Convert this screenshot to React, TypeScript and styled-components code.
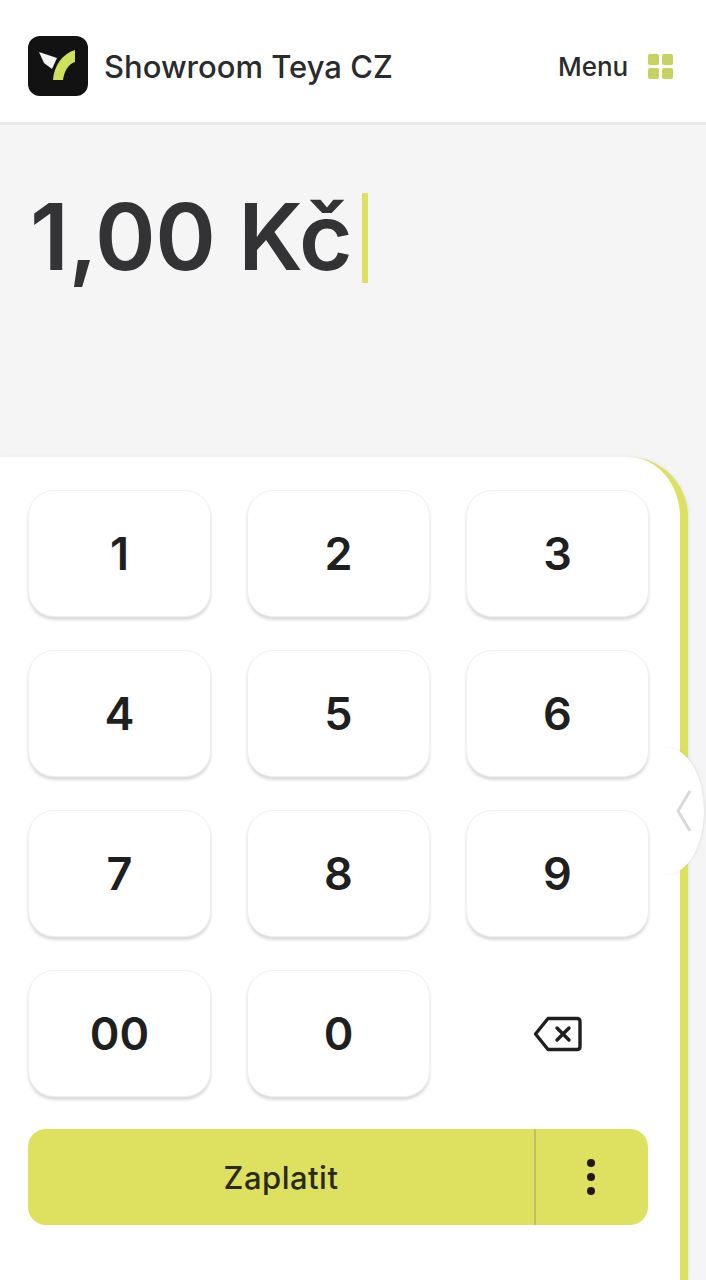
import React from "react";
import styled, { createGlobalStyle } from "styled-components";

const Global = createGlobalStyle`
  html, body { margin: 0; padding: 0; background: #f5f5f5; }
  body { font-family: "Inter", "Liberation Sans", sans-serif; color: #2a2a2a; overflow: hidden; }
`;

const Page = styled.div`
  width: 706px;
  height: 1280px;
  display: flex;
  flex-direction: column;
  position: relative;
  overflow: hidden;
`;

const Header = styled.header`
  height: 122px;
  flex: none;
  box-sizing: border-box;
  background: #fff;
  display: flex;
  align-items: center;
  justify-content: space-between;
  padding: 10px 33px 0 28px;
`;

const HeaderRule = styled.div`
  height: 3px;
  flex: none;
  background: #e9e9e9;
`;

const Brand = styled.div`
  display: flex;
  align-items: center;
  gap: 16px;
`;

const LogoBox = styled.div`
  width: 60px;
  height: 60px;
  border-radius: 12px;
  background: #121212;
  display: flex;
  align-items: center;
  justify-content: center;
`;

const BrandName = styled.span`
  font-size: 31px;
  font-weight: 500;
  color: #2b2b2d;
`;

const MenuBlock = styled.div`
  display: flex;
  align-items: center;
  gap: 20px;
`;

const MenuLabel = styled.span`
  font-size: 26px;
  font-weight: 500;
  letter-spacing: -0.1px;
  color: #2b2b2d;
`;

const MenuGrid = styled.div`
  display: grid;
  grid-template-columns: 11px 11px;
  grid-auto-rows: 11px;
  gap: 3px;
`;

const MenuDot = styled.span`
  background: #c6d35f;
  border-radius: 2px;
`;

const AmountArea = styled.section`
  height: 332px;
  flex: none;
  padding: 68px 0 0 30px;
  box-sizing: border-box;
  display: flex;
  align-items: flex-start;
  gap: 10px;
`;

const AmountText = styled.span`
  font-size: 92px;
  line-height: 88px;
  font-weight: 600;
  letter-spacing: -0.4px;
  color: #333335;
`;

const Caret = styled.span`
  width: 6px;
  height: 90px;
  background: #dde15f;
`;

const Panel = styled.section`
  flex: 1;
  width: 688px;
  box-sizing: border-box;
  background: #fff;
  border-right: 8px solid #dde15f;
  border-top-right-radius: 60px;
  padding: 33px 32px 0 28px;
  box-shadow: 1px 0 3px rgba(120, 110, 180, 0.12);
`;

const Keypad = styled.div`
  display: grid;
  grid-template-columns: repeat(3, 183px);
  grid-auto-rows: 127px;
  column-gap: 36px;
  row-gap: 33px;
  width: 621px;
`;

const Key = styled.button<{ $plain?: boolean }>`
  border: ${(p) => (p.$plain ? "none" : "1px solid #f0f0f0")};
  background: #fff;
  border-radius: 26px;
  padding: 0;
  box-shadow: ${(p) => (p.$plain ? "none" : "0 3px 3px rgba(0,0,0,0.14)")};
  font-family: inherit;
  font-size: 45px;
  font-weight: 600;
  color: #1f1f1f;
  display: flex;
  align-items: center;
  justify-content: center;
`;

const PayBar = styled.div`
  margin-top: 32px;
  width: 620px;
  height: 96px;
  display: flex;
  border-radius: 18px;
  background: #dde15f;
  overflow: hidden;
`;

const PayButton = styled.button`
  flex: 1;
  border: none;
  background: transparent;
  font-family: inherit;
  font-size: 31px;
  font-weight: 500;
  letter-spacing: 0.5px;
  color: #2a2a1c;
  padding: 0;
`;

const MoreButton = styled.button`
  width: 114px;
  flex: none;
  border: none;
  border-left: 2px solid #c0bd63;
  background: transparent;
  padding: 0 3px 0 0;
  display: flex;
  flex-direction: column;
  align-items: center;
  justify-content: center;
  gap: 6px;
`;

const Dot = styled.span`
  width: 8px;
  height: 8px;
  border-radius: 50%;
  background: #21180f;
`;

const Handle = styled.div`
  position: absolute;
  left: 664px;
  top: 748px;
  width: 40px;
  height: 126px;
  border-radius: 0 36px 36px 0 / 0 63px 63px 0;
  background: #fff;
  box-shadow: 1px 0 2px rgba(0, 0, 0, 0.08);
  display: flex;
  align-items: center;
  justify-content: flex-end;
  padding-right: 11px;
  box-sizing: border-box;
`;

export default function App() {
  const keys = ["1", "2", "3", "4", "5", "6", "7", "8", "9", "00", "0"];
  return (
    <Page>
      <Global />
      <Header>
        <Brand>
          <LogoBox>
            <svg width="60" height="60" viewBox="0 0 60 60" aria-hidden="true">
              <path d="M11 16 L29 22 L24 33 L16 27 Z" fill="#f4f4f4" />
              <path d="M25 44 C26 30 34 18 47 14 L47 26 C40 28 36 36 35 44 Z" fill="#cfe05a" />
            </svg>
          </LogoBox>
          <BrandName>Showroom Teya CZ</BrandName>
        </Brand>
        <MenuBlock>
          <MenuLabel>Menu</MenuLabel>
          <MenuGrid>
            <MenuDot />
            <MenuDot />
            <MenuDot />
            <MenuDot />
          </MenuGrid>
        </MenuBlock>
      </Header>
      <HeaderRule />
      <AmountArea>
        <AmountText>1,00 Kč</AmountText>
        <Caret />
      </AmountArea>
      <Panel>
        <Keypad>
          {keys.map((k) => (
            <Key key={k}>{k}</Key>
          ))}
          <Key $plain aria-label="Smazat">
            <svg width="50" height="36" viewBox="0 0 50 36" fill="none" stroke="#1f1f1f" strokeWidth="3.4" strokeLinejoin="round" strokeLinecap="round" aria-hidden="true">
              <path d="M15 2.5 H44 Q47 2.5 47 5.5 V30.5 Q47 33.5 44 33.5 H15 L2.5 18 Z" />
              <path d="M24 12 L36 24 M36 12 L24 24" />
            </svg>
          </Key>
        </Keypad>
        <PayBar>
          <PayButton>Zaplatit</PayButton>
          <MoreButton aria-label="Více">
            <Dot />
            <Dot />
            <Dot />
          </MoreButton>
        </PayBar>
      </Panel>
      <Handle>
        <svg width="18" height="44" viewBox="0 0 18 44" fill="none" stroke="#d9d9d9" strokeWidth="3" aria-hidden="true">
          <path d="M15 2 L3 22 L15 42" />
        </svg>
      </Handle>
    </Page>
  );
}
